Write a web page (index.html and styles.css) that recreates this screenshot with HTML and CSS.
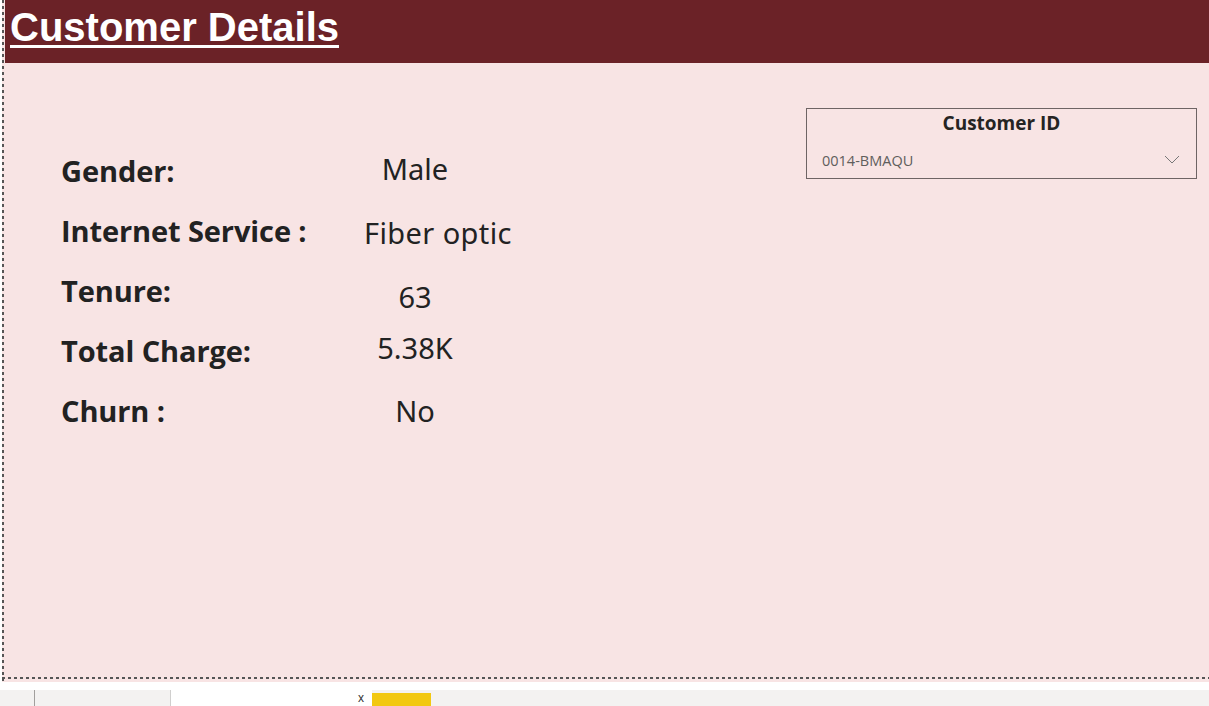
FILE: index.html
```html
<!DOCTYPE html>
<html>
<head>
<meta charset="utf-8">
<link rel="stylesheet" href="styles.css">
</head>
<body>
<div class="page">
  <div class="canvas">
    <header class="header"><h1 class="title">Customer Details</h1></header>
    <div class="content">
      <div class="details">
        <div class="row r1"><span class="label">Gender:</span><span class="value">Male</span></div>
        <div class="row r2"><span class="label">Internet Service :</span><span class="value v-wide">Fiber optic</span></div>
        <div class="row r3"><span class="label">Tenure:</span><span class="value">63</span></div>
        <div class="row r4"><span class="label">Total Charge:</span><span class="value">5.38K</span></div>
        <div class="row r5"><span class="label">Churn :</span><span class="value">No</span></div>
      </div>
      <div class="slicer">
        <div class="slicer-title">Customer ID</div>
        <div class="slicer-select">
          <span class="slicer-value">0014-BMAQU</span>
          <svg class="chev" width="16" height="9" viewBox="0 0 16 9"><path d="M1 1 L8 8 L15 1" fill="none" stroke="#777" stroke-width="1"/></svg>
        </div>
      </div>
    </div>
  </div>
  <div class="tabs">
    <div class="tab tab-first"></div>
    <div class="tab tab-gray"></div>
    <div class="tab tab-active"><span class="tab-x">x</span></div>
    <div class="tab tab-yellow"></div>
  </div>
</div>
</body>
</html>
```
FILE: styles.css
```css
html, body { margin: 0; padding: 0; background: #ffffff; }
.page { width: 1209px; height: 706px; overflow: hidden; }
.canvas {
  margin-left: 2px;
  height: 682px;
  box-sizing: border-box;
  padding-left: 3px;
  padding-bottom: 3px;
  background-color: #f8e4e4;
  background-image:
    repeating-linear-gradient(to bottom, #555555 0 3px, transparent 3px 6px),
    repeating-linear-gradient(to right, #555555 0 3px, transparent 3px 6px);
  background-size: 2px 100%, 100% 2px;
  background-position: 0 0, 0 677px;
  background-repeat: no-repeat;
  display: flex;
  flex-direction: column;
}
.header {
  height: 63px;
  background: #6b2227;
  flex: none;
}
.title {
  margin: 0;
  padding-left: 5px;
  font-family: "Liberation Sans", Arial, sans-serif;
  font-weight: bold;
  font-size: 40px;
  line-height: 54px;
  color: #ffffff;
  text-decoration: underline;
  text-decoration-thickness: 3px;
  text-underline-offset: 4px;
}
.content {
  flex: 1;
  display: flex;
  justify-content: space-between;
  align-items: flex-start;
}
.details {
  padding-top: 88px;
  padding-left: 56px;
  display: flex;
  flex-direction: column;
}
.row {
  display: grid;
  grid-template-columns: 300px 108px;
  align-items: baseline;
  height: 60px;
}
.label {
  font-family: "Open Sans", "Noto Sans", sans-serif;
  font-weight: 700;
  font-size: 29px;
  color: #222222;
  letter-spacing: -0.1px;
  white-space: nowrap;
}
.value {
  font-family: "Noto Sans", "DejaVu Sans", sans-serif;
  font-size: 29px;
  color: #222222;
  text-align: center;
  white-space: nowrap;
}
.r1 .value { position: relative; top: -2px; }
.r2 .value { position: relative; top: 2px; }
.r3 .value { position: relative; top: 6px; }
.r4 .value { position: relative; top: -3px; }
.v-wide { text-align: left; padding-left: 3px; letter-spacing: 0.4px; }
.slicer {
  margin-top: 45px;
  margin-right: 12px;
  width: 391px;
  height: 71px;
  box-sizing: border-box;
  border: 1px solid #6e6464;
  display: flex;
  flex-direction: column;
}
.slicer-title {
  text-align: center;
  font-family: "Open Sans", "Noto Sans", sans-serif;
  font-weight: 700;
  font-size: 19px;
  line-height: 26px;
  padding-top: 1px;
  color: #252423;
}
.slicer-select {
  display: flex;
  justify-content: space-between;
  align-items: center;
  padding: 16px 16px 0 15px;
}
.slicer-value {
  font-family: "Open Sans", "Noto Sans", sans-serif;
  font-size: 14.5px;
  line-height: 18px;
  color: #605e5c;
}
.chev { position: relative; top: -2px; }
.tabs {
  margin-top: 8px;
  height: 16px;
  background: #f3f2f1;
  display: flex;
}
.tab { height: 16px; box-sizing: border-box; }
.tab-first { width: 35px; border-right: 1px solid #a19f9d; }
.tab-gray { width: 136px; border-right: 1px solid #d0cfce; }
.tab-active { width: 201px; background: #ffffff; position: relative; }
.tab-x {
  position: absolute;
  right: 8px;
  top: 1px;
  font-family: "Liberation Sans", Arial, sans-serif;
  font-size: 12px;
  line-height: 14px;
  color: #333;
}
.tab-yellow { width: 59px; margin-top: 3px; background: #f2c811; }
```
